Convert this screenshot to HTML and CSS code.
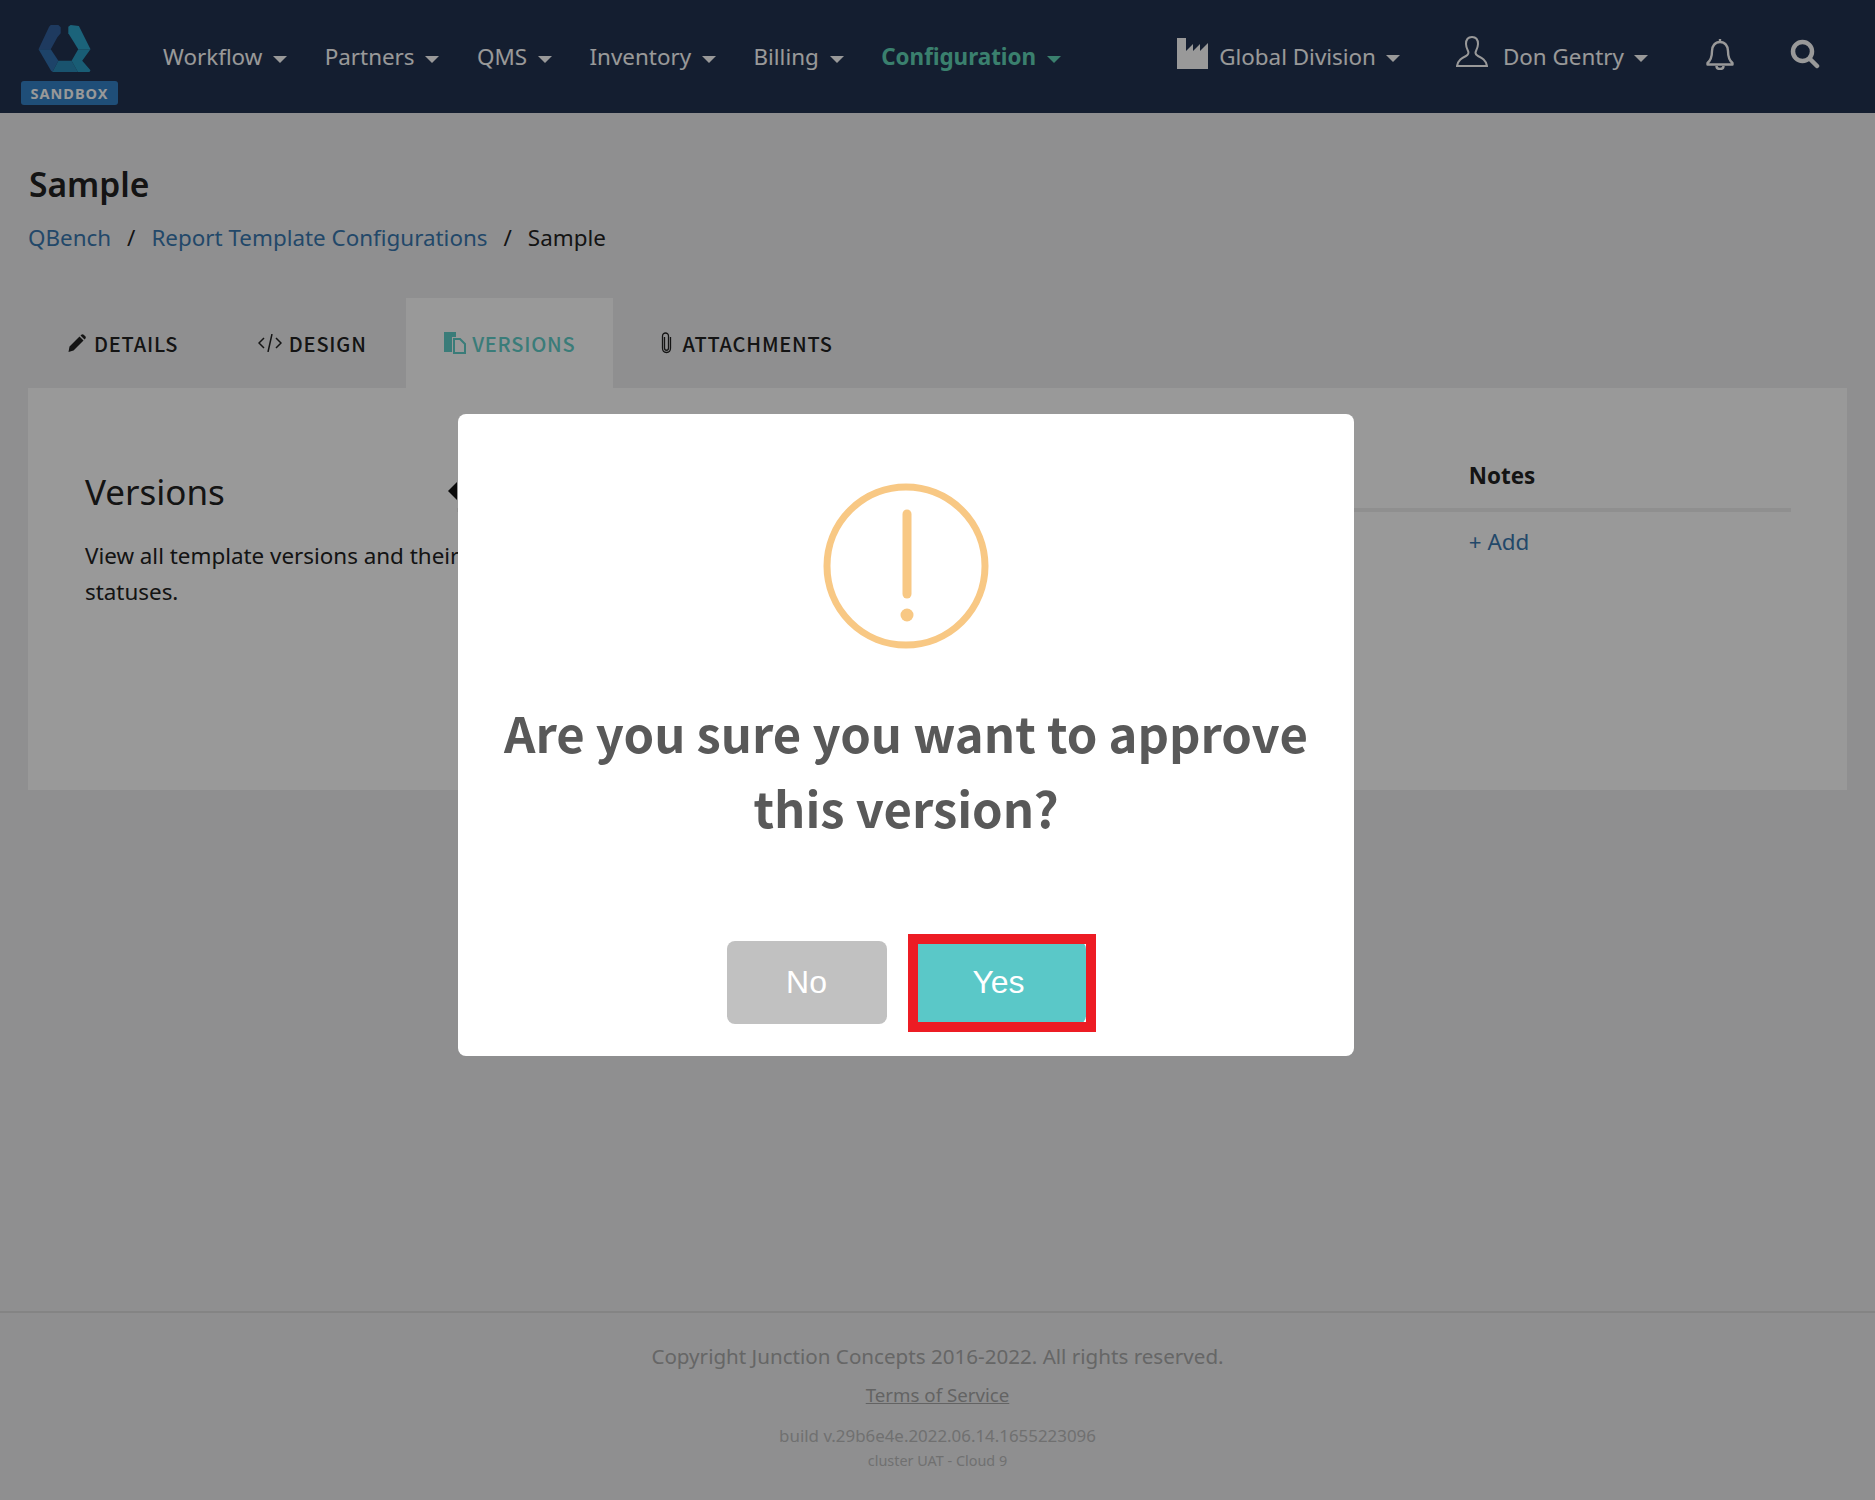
FILE: index.html
```html
<!DOCTYPE html>
<html lang="en">
<head>
  <meta charset="UTF-8" />
  <title>Sample</title>
  <link rel="stylesheet" href="styles.css">
</head>
<body>
  <nav class="navbar">
    <div class="brand">
      <svg class="logo" viewBox="118 75 157 142">
        <polygon fill="#32619f" points="155,75 178,75 185,82 185,100 175,112 155,148 118,148 150,80"/>
        <polygon fill="#3170b0" points="118,148 155,148 178,183 160,217 155,212"/>
        <polygon fill="#2b8ab8" points="178,183 218,183 237,217 160,217"/>
        <polygon fill="#2a9cc4" points="218,183 238,148 275,148 250,183 275,212 272,217 237,217"/>
        <polygon fill="#2ea5cc" points="208,80 215,75 240,78 275,148 238,148 208,100"/>
      </svg>
      <span class="badge">SANDBOX</span>
    </div>
    <ul class="menu">
      <li>Workflow <i class="caret"></i></li>
      <li>Partners <i class="caret"></i></li>
      <li>QMS <i class="caret"></i></li>
      <li>Inventory <i class="caret"></i></li>
      <li>Billing <i class="caret"></i></li>
      <li class="current">Configuration <i class="caret"></i></li>
    </ul>
    <div class="nav-right">
      <div class="nav-item division">
        <svg class="factory" viewBox="0 0 31 31"><path fill="#fff" d="M0 0h9v13l7-7v7l7-7v7l8-8v26H0z"/></svg>
        Global Division <i class="caret"></i>
      </div>
      <div class="nav-item account">
        <svg class="user" viewBox="0 0 32 32" fill="none" stroke="#fff" stroke-width="2"><path d="M16 1c-4 0-6 3-6 7 0 3 1 5 2 7 1 2 0 4-2 5-4 2-8 4-9 10h30c-1-6-5-8-9-10-2-1-3-3-2-5 1-2 2-4 2-7 0-4-2-7-6-7z"/></svg>
        Don Gentry <i class="caret"></i>
      </div>
      <svg class="bell" viewBox="0 0 28 32" fill="none" stroke="#fff" stroke-width="2.400"><path d="M14 4c-5 0-8 4-8 9 0 7-2 10-4.500 12v1.500h25V25c-2.500-2-4.500-5-4.500-12 0-5-3-9-8-9zM14 1v3M10.500 28c0 4 7 4 7 0" stroke-linejoin="round"/></svg>
      <svg class="search" viewBox="0 0 30 30" fill="none" stroke="#fff" stroke-width="4.500"><circle cx="12.500" cy="12.500" r="9.500"/><path d="M19.500 19.500l7.500 7.500" stroke-linecap="round"/></svg>
    </div>
  </nav>

  <main class="page">
    <h1>Sample</h1>
    <div class="breadcrumb">
      <a>QBench</a><span class="sep">/</span><a>Report Template Configurations</a><span class="sep">/</span><span>Sample</span>
    </div>

    <div class="tabs">
      <div class="tab">
        <svg class="tab-icon pencil" viewBox="0 0 18 18"><path fill="#222" d="M1.500 12.500L11.500 2.500l4 4-10 10-5 1.500zM12.500 1.500l.8-.8c.7-.7 1.700-.7 2.400 0l1.600 1.600c.7.700.7 1.700 0 2.400l-.8.800z"/></svg>
        DETAILS
      </div>
      <div class="tab">
        <svg class="tab-icon code" viewBox="0 0 24 18" fill="none" stroke="#222" stroke-width="1.500"><path d="M6 4L1 9l5 5M18 4l5 5-5 5M14 0l-4 18"/></svg>
        DESIGN
      </div>
      <div class="tab active">
        <svg class="tab-icon docs" viewBox="0 0 24 22"><path fill="#62cfca" d="M1 0h12v5H9v15H1z"/><path fill="none" stroke="#62cfca" stroke-width="2" d="M11 7h6l5 5v9H11z"/></svg>
        VERSIONS
      </div>
      <div class="tab attach">
        <svg class="tab-icon clip" viewBox="0 0 12 22" fill="none" stroke="#222" stroke-width="1.300"><path d="M4 5v11c0 3 4 3 4 0V4C8 0 2 0 2 4v12c0 6 8 6 8 0V5"/></svg>
        ATTACHMENTS
      </div>
    </div>

    <section class="card">
      <div class="intro">
        <h2>Versions</h2>
        <p>View all template versions and their statuses.</p>
      </div>
      <i class="arrow"></i>
      <div class="notes">
        <h4>Notes</h4>
        <a>+ Add</a>
      </div>
    </section>
  </main>

  <footer class="footer">
    <p class="copy">Copyright Junction Concepts 2016-2022. All rights reserved.</p>
    <p><a class="terms">Terms of Service</a></p>
    <p class="build">build v.29b6e4e.2022.06.14.1655223096</p>
    <p class="cluster">cluster UAT - Cloud 9</p>
  </footer>

  <!-- Confirm dialog -->
  <div class="backdrop"></div>
  <div class="dialog">
    <svg class="warn" viewBox="0 0 170 170" fill="none" stroke="#f8c884" stroke-width="7">
      <circle cx="85" cy="85" r="79"/>
      <path d="M86 33v80" stroke-width="9" stroke-linecap="round"/>
      <circle cx="86" cy="134" r="6.500" fill="#f8c884" stroke="none"/>
    </svg>
    <h3>Are you sure you want to approve this version?</h3>
    <div class="dialog-actions">
      <button class="btn no-btn">No</button>
      <button class="btn yes-btn">Yes</button>
    </div>
    <div class="highlight"></div>
  </div>
</body>
</html>
```

FILE: styles.css
```css
* {
  margin: 0;
  padding: 0;
  box-sizing: border-box;
}

html, body {
  height: 1500px;
  overflow: hidden;
}

body {
  background: #eeeff1;
  font-family: 'Noto Sans', sans-serif;
  color: #222;
  display: flex;
  flex-direction: column;
}

/* Navbar */
.navbar {
  height: 113px;
  flex: none;
  background: #223250;
  color: #fff;
  display: flex;
  align-items: flex-start;
  padding-left: 21px;
}

.brand {
  width: 97px;
  display: flex;
  flex-direction: column;
  align-items: center;
  padding-top: 25px;
}

.logo {
  width: 53px;
  height: 47px;
  margin-left: -11px;
}

.badge {
  width: 97px;
  height: 24px;
  margin-top: 9px;
  background: #3482c8;
  border-radius: 3px;
  font-size: 14.500px;
  font-weight: 700;
  letter-spacing: 1px;
  line-height: 24px;
  text-align: center;
}

.menu {
  list-style: none;
  display: flex;
  gap: 37.600px;
  margin-left: 45px;
  padding-top: 40px;
  font-size: 22.400px;
  line-height: 34px;
}

.menu li {
  white-space: nowrap;
}

.menu .current {
  color: #62d6b8;
  font-weight: 700;
}

.caret {
  display: inline-block;
  width: 0;
  height: 0;
  margin-left: 5px;
  vertical-align: 2px;
  border-left: 7.500px solid transparent;
  border-right: 7.500px solid transparent;
  border-top: 7.500px solid currentColor;
}

.nav-right {
  margin-left: auto;
  display: flex;
  align-items: center;
  height: 113px;
  padding-right: 55px;
  font-size: 22.400px;
  white-space: nowrap;
}

.nav-item {
  display: flex;
  align-items: center;
  gap: 12px;
}

.nav-item .caret {
  margin-left: -2px;
  margin-top: 3px;
}

.factory {
  width: 31px;
  height: 31px;
  margin-bottom: 6px;
  margin-right: -1px;
}

.account {
  margin-left: 56px;
}

.user {
  width: 32px;
  height: 32px;
  margin-bottom: 10px;
  margin-right: 3px;
}

.bell {
  width: 28px;
  height: 32px;
  margin-left: 58px;
  margin-bottom: 6px;
}

.search {
  width: 30px;
  height: 30px;
  margin-left: 56px;
  margin-bottom: 6px;
}

/* Page */
.page {
  flex: 1;
  padding: 48px 28px 0;
}

h1 {
  font-size: 33.600px;
  font-weight: 600;
  line-height: 46px;
  margin-left: 1px;
}

.breadcrumb {
  margin-top: 14px;
  font-size: 22.400px;
  line-height: 34px;
}

.breadcrumb a {
  color: #3a78b0;
}

.sep {
  margin: 0 16px;
}

.tabs {
  display: flex;
  margin-top: 43px;
  height: 90px;
}

.tab {
  display: flex;
  align-items: center;
  gap: 7px;
  padding: 0 39.500px 0 40px;
  font-family: 'Noto Sans CJK SC', 'Noto Sans', sans-serif;
  font-size: 20px;
  font-weight: 500;
  letter-spacing: 0.800px;
}

.tab.active {
  background: #fff;
  color: #62cfca;
  padding: 0 37px;
}

.tab.attach {
  padding-left: 47px;
}

.tab-icon {
  flex: none;
}

.pencil {
  width: 18px;
  height: 18px;
  margin-right: 1px;
}

.code {
  width: 24px;
  height: 18px;
}

.docs {
  width: 24px;
  height: 22px;
  margin-right: -2px;
}

.clip {
  width: 13px;
  height: 22px;
  margin-right: 3px;
}

.card {
  height: 402px;
  background: #fff;
  display: flex;
  padding: 56px 56px 56px 57px;
}

.intro {
  width: 410px;
}

h2 {
  font-size: 35px;
  font-weight: 400;
  line-height: 48px;
  margin-top: 24px;
}

.intro p {
  margin-top: 22px;
  font-size: 22.400px;
  line-height: 36px;
}

.arrow {
  width: 0;
  height: 0;
  margin-left: -28px;
  margin-top: 38px;
  border-top: 9px solid transparent;
  border-bottom: 9px solid transparent;
  border-right: 9px solid #111;
}

.notes {
  margin-left: auto;
  width: 1400px;
  padding-top: 15px;
}

.notes h4 {
  font-size: 22.400px;
  font-weight: 700;
  line-height: 34px;
  padding-left: 1012px;
  padding-bottom: 15px;
  border-bottom: 4px solid #eee;
}

.notes a {
  display: block;
  padding-left: 1012px;
  margin-top: 14px;
  font-size: 22.400px;
  color: #3a78b0;
}

/* Footer */
.footer {
  height: 189px;
  flex: none;
  border-top: 2px solid #dcdcdc;
  text-align: center;
  padding-top: 27px;
  color: #999;
}

.copy {
  font-size: 20.600px;
  line-height: 32px;
  color: #aaa;
}

.terms {
  display: inline-block;
  margin-top: 8px;
  font-size: 18.700px;
  line-height: 30px;
  text-decoration: underline;
  color: #a6a6a6;
}

.build {
  margin-top: 13px;
  font-size: 16.900px;
  line-height: 26px;
  color: #bbb;
}

.cluster {
  font-size: 14.400px;
  line-height: 24px;
  color: #bbb;
}

/* Confirm dialog */
.backdrop {
  position: fixed;
  inset: 0;
  background: rgba(0,0,0,0.4);
}

.dialog {
  position: fixed;
  left: 458px;
  top: 414px;
  width: 896px;
  height: 642px;
  background: #fff;
  border-radius: 8px;
  display: flex;
  flex-direction: column;
  align-items: center;
  padding-top: 67px;
}

.warn {
  width: 170px;
  height: 170px;
  margin-left: -1px;
}

h3 {
  width: 840px;
  margin-top: 43px;
  font-family: 'Noto Sans CJK SC', 'Noto Sans', sans-serif;
  font-size: 49px;
  font-weight: 700;
  line-height: 75px;
  text-align: center;
  color: #595959;
}

.dialog-actions {
  display: flex;
  gap: 25px;
  margin-top: 97px;
}

.btn {
  height: 83px;
  border: none;
  border-radius: 8px;
  color: #fff;
  font-family: 'Liberation Sans', sans-serif;
  font-size: 32px;
}

.no-btn {
  width: 160px;
  background: #c1c1c1;
}

.yes-btn {
  width: 174px;
  background: #5ac8c8;
}

.highlight {
  position: absolute;
  left: 450px;
  top: 520px;
  width: 188px;
  height: 98px;
  border: 10px solid #ed1c24;
}
```
